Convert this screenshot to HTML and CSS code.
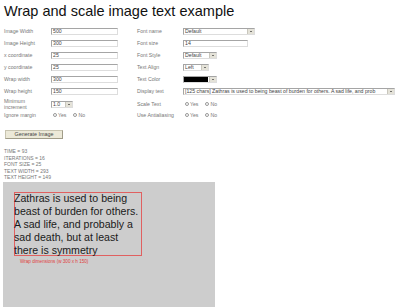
FILE: index.html
```html
<!DOCTYPE html>
<html lang="en">
<head>
  <meta charset="UTF-8" />
  <title>Wrap and scale image text example</title>
  <link rel="stylesheet" href="styles.css">
</head>
<body>
  <h1>Wrap and scale image text example</h1>

  <div class="form">
    <span class="lbl">Image Width</span>
    <span class="field"><span class="input w-long">500</span></span>
    <span class="lbl">Font name</span>
    <span class="field"><span class="select w-font">Default<i class="arrow"></i></span></span>

    <span class="lbl">Image Height</span>
    <span class="field"><span class="input w-long">300</span></span>
    <span class="lbl">Font size</span>
    <span class="field"><span class="input w-size">14</span></span>

    <span class="lbl">x coordinate</span>
    <span class="field"><span class="input w-long">25</span></span>
    <span class="lbl">Font Style</span>
    <span class="field"><span class="select w-style">Default<i class="arrow"></i></span></span>

    <span class="lbl">y coordinate</span>
    <span class="field"><span class="input w-long">25</span></span>
    <span class="lbl">Text Align</span>
    <span class="field"><span class="select w-align">Left<i class="arrow"></i></span></span>

    <span class="lbl">Wrap width</span>
    <span class="field"><span class="input w-long">300</span></span>
    <span class="lbl">Text Color</span>
    <span class="field"><span class="select w-style"><b class="swatch"></b><i class="arrow"></i></span></span>

    <span class="lbl">Wrap height</span>
    <span class="field"><span class="input w-long">150</span></span>
    <span class="lbl">Display text</span>
    <span class="field"><span class="select w-text">[125 chars] Zathras is used to being beast of burden for others. A sad life, and prob<i class="arrow"></i></span></span>

    <span class="lbl tall">Minimum<br>increment</span>
    <span class="field tall"><span class="select w-inc">1.0<i class="arrow"></i></span></span>
    <span class="lbl tall">Scale Text</span>
    <span class="field tall">
      <span class="radio on"></span><span class="opt">Yes</span>
      <span class="radio"></span><span class="opt">No</span>
    </span>

    <span class="lbl">Ignore margin</span>
    <span class="field">
      <span class="radio on"></span><span class="opt">Yes</span>
      <span class="radio"></span><span class="opt">No</span>
    </span>
    <span class="lbl">Use Antialiasing</span>
    <span class="field">
      <span class="radio on"></span><span class="opt">Yes</span>
      <span class="radio"></span><span class="opt">No</span>
    </span>
  </div>

  <div class="actions">
    <span class="button">Generate Image</span>
  </div>

  <div class="stats">
    TIME = 93<br>
    ITERATIONS = 16<br>
    FONT SIZE = 25<br>
    TEXT WIDTH = 293<br>
    TEXT HEIGHT = 149
  </div>

  <div class="canvas">
    <div class="wrap-box">
      <p class="wrap-text">Zathras is used to being<br>beast of burden for others.<br>A sad life, and probably a<br>sad death, but at least<br>there is symmetry</p>
    </div>
    <div class="wrap-note">Wrap dimensions (w 300 x h 150)</div>
  </div>
</body>
</html>
```

FILE: styles.css
```css
body {
  margin: 0;
  font-family: "Liberation Sans", Arial, sans-serif;
  color: #666;
  background: #fff;
}
h1 {
  margin: 0;
  padding-left: 4px;
  height: 25px;
  line-height: 23px;
  font-size: 14.5px;
  font-weight: normal;
  color: #111;
}
.form {
  display: grid;
  grid-template-columns: 47px 86px 46px auto;
  grid-auto-rows: 12px;
  padding-left: 4px;
  font-size: 5.2px;
}
.lbl {
  display: flex;
  align-items: center;
  color: #777;
  line-height: 6px;
}
.field {
  display: flex;
  align-items: center;
}
.tall {
  height: 14px;
}
.input, .select {
  position: relative;
  box-sizing: border-box;
  height: 7px;
  line-height: 5px;
  padding-left: 1px;
  border: 1px solid #a5a5a5;
  border-right-color: #ddd;
  border-bottom-color: #ddd;
  color: #444;
  background: #fff;
  white-space: nowrap;
  overflow: hidden;
}
.select {
  padding-right: 8px;
}
.arrow {
  position: absolute;
  right: 0;
  top: 0;
  width: 6px;
  height: 5px;
  background: #e4e2d8;
  border-left: 1px solid #c9c7bd;
}
.arrow::after {
  content: "";
  position: absolute;
  left: 2px;
  top: 2px;
  border-left: 1px solid transparent;
  border-right: 1px solid transparent;
  border-top: 1px solid #000;
}
.w-long { width: 67px; }
.w-font { width: 72px; }
.w-size { width: 65px; }
.w-style { width: 34px; }
.w-align { width: 26px; }
.w-text { width: 212px; }
.w-inc { width: 22px; }
.swatch {
  display: block;
  width: 24px;
  height: 5px;
  margin-left: -1px;
  background: #000;
}
.radio {
  box-sizing: border-box;
  width: 4px;
  height: 4px;
  margin: 0 1px 0 2px;
  border: 1px solid #999;
  border-radius: 50%;
  background: #fff;
}
.radio.on {
  background: radial-gradient(circle, #444 40%, #fff 50%);
}
.opt {
  margin-right: 5px;
  color: #777;
}
.actions {
  padding: 1px 0 0 5px;
}
.button {
  display: inline-block;
  box-sizing: border-box;
  width: 58px;
  height: 9px;
  line-height: 7px;
  text-align: center;
  font-size: 5.4px;
  color: #444;
  background: #ece9d8;
  border: 1px solid #c8c4b0;
  border-right-color: #a09c88;
  border-bottom-color: #a09c88;
}
.stats {
  padding: 8px 0 0 4px;
  height: 34px;
  font-size: 5px;
  line-height: 6.6px;
  color: #777;
}
.canvas {
  position: relative;
  margin-left: 3px;
  width: 212px;
  height: 127px;
  background: #cdcdcd;
  overflow: hidden;
}
.wrap-box {
  position: absolute;
  left: 11px;
  top: 10px;
  width: 128px;
  height: 64px;
  box-sizing: border-box;
  border: 1px solid #e06060;
}
.wrap-text {
  margin: -1px 0 0 -1px;
  width: 140px;
  font-size: 10.6px;
  line-height: 13px;
  white-space: nowrap;
  color: #1a1a1a;
}
.wrap-note {
  position: absolute;
  left: 17px;
  top: 77px;
  font-size: 4.6px;
  color: #e04040;
}
```
